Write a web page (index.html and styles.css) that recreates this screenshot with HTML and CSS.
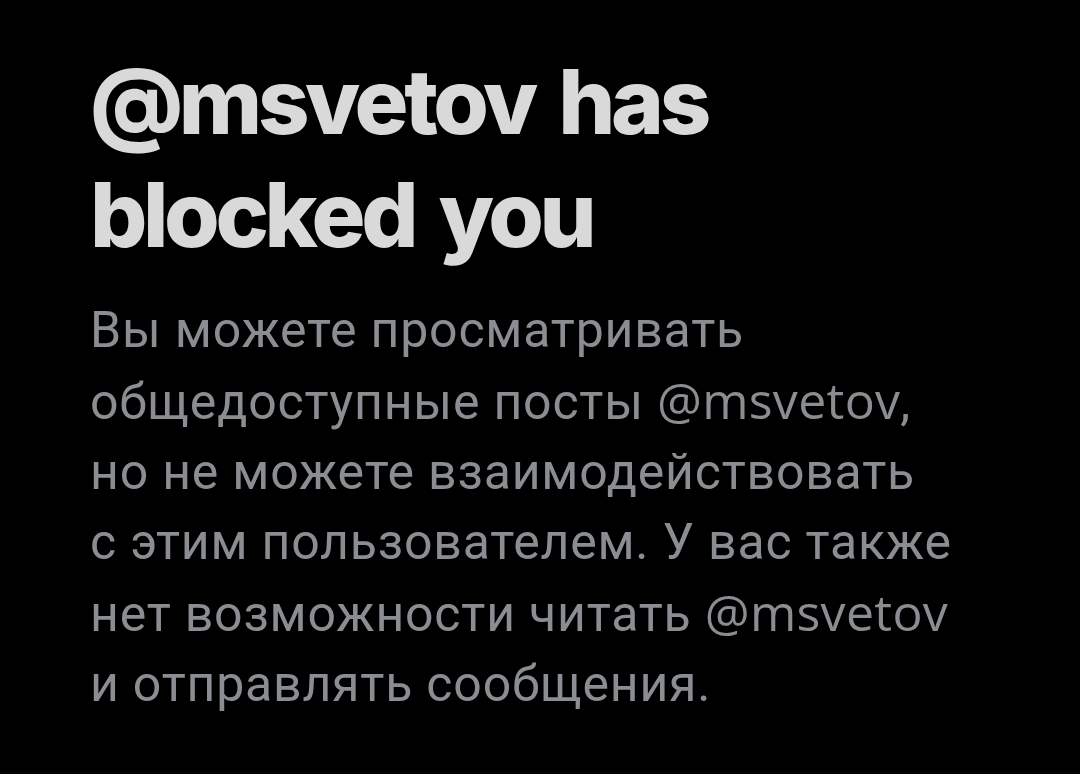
FILE: index.html
```html
<!DOCTYPE html>
<html lang="en">
<head>
    <meta charset="UTF-8">
    <meta name="viewport" content="width=device-width, initial-scale=1.0">
    <title>blocked</title>
    <link rel="stylesheet" href="styles.css">
</head>
<body>
    <div class="blocked">
        <h1>@msvetov has<br>blocked you</h1>
        <p>Вы можете просматривать<br>общедоступные посты <span class="handle">@msvetov</span>,<br>но не можете взаимодействовать<br>с этим пользователем. У вас также<br>нет возможности читать <span class="handle">@msvetov</span><br>и отправлять сообщения.</p>
    </div>
</body>
</html>
```
FILE: styles.css
```css
*{
    margin:0;
    padding:0;
}
body{
    background:#000;
    font-family:Roboto, "Noto Sans", sans-serif;
}
.blocked{
    padding:45px 0 0 90px;
}
.blocked h1{
    color:#d9d9d9;
    font-family:Inter, sans-serif;
    font-size:90px;
    font-weight:800;
    line-height:113px;
    letter-spacing:-4.4px;
    word-spacing:9px;
}
.blocked p{
    margin-top:24px;
    color:#8a8d91;
    font-size:50px;
    line-height:70px;
    letter-spacing:0.8px;
}
.handle{
    font-family:"Open Sans", sans-serif;
    letter-spacing:0.3px;
}
```
